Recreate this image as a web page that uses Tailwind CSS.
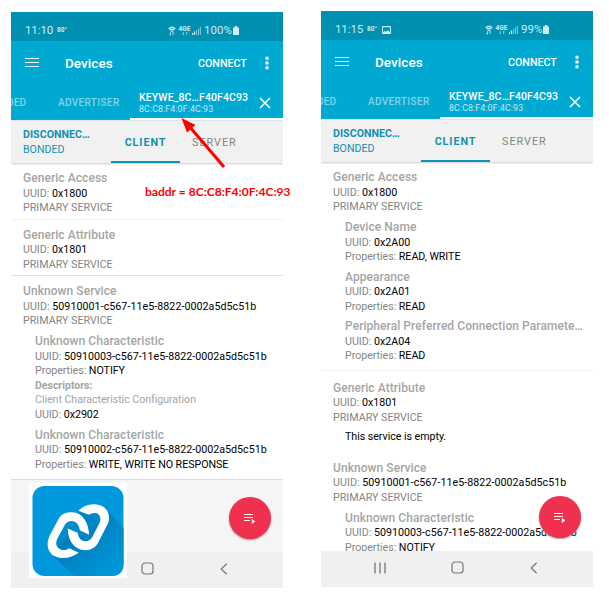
<!DOCTYPE html>
<html lang="en">
<head>
<meta charset="utf-8">
<title>Devices</title>
<script src="https://cdn.jsdelivr.net/npm/@tailwindcss/browser@4"></script>
</head>
<body class="relative flex h-[600px] w-[609px] items-start gap-[38px] overflow-hidden bg-white pl-[11px] font-['Roboto','Liberation_Sans',sans-serif] text-[10.7px] leading-[14.5px] whitespace-nowrap text-[#858585]">

<svg class="hidden">
  <symbol id="wifi" viewBox="0 0 8 10"><path d="M.6 3Q4-.6 7.4 3M1.8 4.3Q4 2.200 6.200 4.300M3 5.600Q4 4.700 5 5.600" fill="none" stroke="#c5e9f2" stroke-width="1.200"/><path d="M2.500 6v3.200M1.200 8l1.300 1.300M5 9.200V6.200M5 6.200l1.200 1.200" fill="none" stroke="#a8dcea" stroke-width=".9"/></symbol>
  <symbol id="arrows" viewBox="0 0 8 3"><path d="M2.500 0v3M1 1.500L2.500 3M5.500 3V0M5.500 0L7 1.500" fill="none" stroke="#7cc6da" stroke-width=".9"/></symbol>
  <symbol id="signal" viewBox="0 0 9 8"><path d="M.5 8V6M2.500 8V4.500" stroke="#cdebf3" stroke-width="1.200"/><path d="M4.500 8V3M6.500 8V1.500M8.400 8V0" stroke="#7cc6da" stroke-width="1.100"/></symbol>
  <symbol id="battery" viewBox="0 0 6 9"><path d="M0 1.500h1.700V0h2.600v1.500H6V9H0z" fill="#d0edf4"/></symbol>
  <symbol id="menu" viewBox="0 0 14 11"><path d="M0 1.500h14M0 5.500h14M0 9.500h14" stroke="#e6f6fa" stroke-width="1"/></symbol>
  <symbol id="dots" viewBox="0 0 4 14"><path d="M.5 .7h3v3h-3zM.5 5.500h3v3h-3zM.5 10.300h3v3h-3z" fill="#fff"/></symbol>
  <symbol id="close" viewBox="0 0 12 12"><path d="M1 1l10 10M11 1L1 11" stroke="#fff" stroke-width="1.500"/></symbol>
  <symbol id="queue" viewBox="0 0 12 11"><path d="M0 1.500h9M0 4.500h9M0 7.500h6" stroke="#fff" stroke-width="1"/><path d="M7.800 6v5l3.600-2.500z" fill="#fff"/></symbol>
  <symbol id="recents" viewBox="0 0 12 12"><path d="M1 .5v11M6 .5v11M11 .5v11" stroke="#777" stroke-width="1.300"/></symbol>
  <symbol id="home" viewBox="0 0 13 13"><rect x="1" y="1" width="11" height="11" rx="3" fill="none" stroke="#777" stroke-width="1.200"/></symbol>
  <symbol id="back" viewBox="0 0 8 12"><path d="M6.700 .8L1.200 6l5.500 5.200" fill="none" stroke="#777" stroke-width="1.200"/></symbol>
</svg>

<!-- First phone -->
<main class="relative mt-3 flex h-[576px] w-[272px] shrink-0 flex-col overflow-hidden">
  <header class="shrink-0 bg-[#00a9d1] text-white">
    <div class="flex h-[29px] items-center bg-[#0090b2] pt-2 pl-[14px] text-[11.500px] text-[#cdebf3]">
      <span class="w-[32px] tracking-[-0.100px]">11:10</span>
      <span class="w-[111px] text-[6.500px] font-bold">80°</span>
      <svg class="h-[10px] w-2"><use href="#wifi"/></svg>
      <span class="ml-[3px] flex w-[11px] flex-col items-center text-[6.500px] leading-[6px] font-bold"><span>4GE</span><svg class="h-[3px] w-2"><use href="#arrows"/></svg></span>
      <svg class="ml-[2px] h-2 w-[9px]"><use href="#signal"/></svg>
      <span class="ml-[3px] w-[28.500px] text-[11.500px]">100%</span>
      <svg class="h-[9px] w-[6px]"><use href="#battery"/></svg>
    </div>
    <div class="flex h-[44px] items-center pl-[14px]">
      <svg class="-mt-[1px] h-[11px] w-[14px]"><use href="#menu"/></svg>
      <h1 class="ml-[26px] w-[133px] text-[13.500px] font-medium tracking-[0.050px]">Devices</h1>
      <span class="w-[67px] pt-[2px] text-[10.700px] font-medium">CONNECT</span>
      <svg class="h-[14px] w-1"><use href="#dots"/></svg>
    </div>
    <div class="flex h-[35px] font-medium">
      <span class="w-[47px] pt-[11px] text-[10px] tracking-[0.200px] text-[#80d4e8]"><span class="-ml-[4px]">DED</span></span>
      <span class="w-[72px] pt-[11px] text-[10px] tracking-[0.350px] text-[#80d4e8]">ADVERTISER</span>
      <div class="flex w-[153px] border-b-2 border-white pl-[9px]">
        <div class="w-[120px] pt-[7px]"><div class="h-[11px] text-[10.500px] leading-[12px] tracking-[0.100px]">KEYWE_8C…F40F4C93</div><div class="text-[8.800px] leading-[12px] font-normal tracking-[0.120px] text-[#c3eaf4]">8C:C8:F4:0F:4C:93</div></div>
        <svg class="mt-3 h-3 w-3"><use href="#close"/></svg>
      </div>
    </div>
  </header>
  <nav class="flex h-[43px] shrink-0 border-t border-[#d8e6ea] bg-[#f1f1f1] shadow-[0_1px_2px_#ccc]">
    <div class="w-[100px] pt-[7px] pl-3 text-[10.600px] leading-[14.500px] text-[#1290ae]"><div class="font-bold tracking-[0.050px]">DISCONNEC…</div><div>BONDED</div></div>
    <div class="w-[69px] border-b-2 border-[#0f93b3] pt-[15px] text-center text-[10.800px] font-bold tracking-[0.900px] text-[#1290ae]">CLIENT</div>
    <div class="pt-[15px] pl-[12px] text-[10.800px] tracking-[1px]">SERVER</div>
  </nav>
  <div class="h-[316.500px] shrink-0 border-b border-[#dcdcdc]">
    <section class="h-[56.500px] border-b border-[#f1f1f1] pt-[7px] pl-3">
      <h2 class="text-[12px] leading-[16.500px] font-medium tracking-[0.060px] text-[#a5a5a5]">Generic Access</h2>
      <p>UUID: <span class="text-black">0x1800</span></p>
      <p>PRIMARY SERVICE</p>
    </section>
    <section class="h-[56.500px] border-b border-[#e2e2e2] pt-[7px] pl-3">
      <h2 class="text-[12px] leading-[16.500px] font-medium tracking-[0.060px] text-[#a5a5a5]">Generic Attribute</h2>
      <p>UUID: <span class="text-black">0x1801</span></p>
      <p>PRIMARY SERVICE</p>
    </section>
    <section class="pt-[7px] pl-3">
      <h2 class="text-[12px] leading-[16.500px] font-medium tracking-[0.060px] text-[#a5a5a5]">Unknown Service</h2>
      <p class="tracking-[0.040px]">UUID: <span class="text-black">50910001-c567-11e5-8822-0002a5d5c51b</span></p>
      <p>PRIMARY SERVICE</p>
      <div class="mt-[4.500px] pl-3">
        <h3 class="text-[12px] leading-[16.500px] font-medium tracking-[0.060px] text-[#a5a5a5]">Unknown Characteristic</h3>
        <p>UUID: <span class="text-black">50910003-c567-11e5-8822-0002a5d5c51b</span></p>
        <p class="tracking-[-0.050px]">Properties: <span class="text-black">NOTIFY</span></p>
        <p class="text-[10.500px] font-bold text-[#a5a5a5]">Descriptors:</p>
        <p class="tracking-[-0.060px] text-[#a5a5a5]">Client Characteristic Configuration</p>
        <p class="tracking-[-0.050px]">UUID: <span class="text-black">0x2902</span></p>
      </div>
      <div class="mt-[4.500px] pl-3">
        <h3 class="text-[12px] leading-[16.500px] font-medium tracking-[0.060px] text-[#a5a5a5]">Unknown Characteristic</h3>
        <p>UUID: <span class="text-black">50910002-c567-11e5-8822-0002a5d5c51b</span></p>
        <p class="tracking-[-0.050px]">Properties: <span class="text-black">WRITE, WRITE NO RESPONSE</span></p>
      </div>
    </section>
  </div>
  <div class="flex-1 bg-[#f5f5f5]"></div>
  <footer class="flex h-9 shrink-0 items-center bg-[#f0f0f0] pb-[3px] pl-[129.500px]">
    <svg class="h-[13px] w-[13px]"><use href="#home"/></svg>
    <svg class="ml-[66px] h-3 w-2"><use href="#back"/></svg>
  </footer>
  <button class="absolute top-[485px] left-[218px] flex size-[42px] items-center justify-center rounded-full bg-[#f0304f] shadow-[0_1px_2px_#999]"><svg class="h-[11px] w-3"><use href="#queue"/></svg></button>
  <!-- App logo over the footer -->
  <svg class="absolute top-[471px] left-[18px] h-[95px] w-[98px]" viewBox="0 0 98 95">
    <defs>
      <linearGradient id="shade" gradientUnits="userSpaceOnUse" x1="130" y1="140" x2="240" y2="260"><stop offset="0" stop-color="#007ab5"/><stop offset="1" stop-color="#0095d9"/></linearGradient>
    </defs>
    <path d="M0 0h98v95H0z" fill="#fff"/>
    <g transform="translate(-.5 -1) scale(.33333)">
      <rect x="12" y="12" width="273" height="270" rx="36" fill="#0098dc"/>
      <path d="M234 84L285 137V246Q285 282 249 282H139L74 222L130 150L180 96z" fill="url(#shade)"/>
      <path d="M108 125L160 80L200 92L215 105L190 165L150 160L120 200L90 200L82 185z" fill="#008ccb"/>
      <path d="M90 198L128 140L148 190L120 202z" fill="#0080bd"/>
      <path d="M155 92L182 97L215 135L188 168z" fill="#0083c1"/>
      <path d="M182 158C180 125 165 92 130 91C108 91 97 98 89 113L64 160C49 192 61 222 92 227C116 231 134 223 151 212L122 199C113 206 99 206 90 199C81 191 82 180 87 169L110 127C120 113 138 114 147 126Q152 133 154 145z" fill="#fff"/>
      <path d="M150 86C164 72 181 65 201 67C232 70 247 93 240 120Q238 127 234 133L210 180C200 200 181 208 158 203C132 196 117 168 118 138L147 151C149 166 157 178 171 178C181 178 187 173 191 166L213 123C220 108 213 94 200 93Q189 92 181 98z" fill="#fff"/>
      <path d="M154 145L147 151L118 138" fill="none" stroke="#0086c4" stroke-width="3"/>
    </g>
  </svg>
</main>

<!-- Second phone -->
<main class="relative mt-[11px] flex h-[576px] w-[272px] shrink-0 flex-col overflow-hidden">
  <header class="shrink-0 bg-[#00a9d1] text-white">
    <div class="flex h-[29px] items-center bg-[#0090b2] pt-2 pl-[14px] text-[11.500px] text-[#cdebf3]">
      <span class="w-[32px] tracking-[-0.100px]">11:15</span>
      <span class="w-[15px] text-[6.500px] font-bold">80°</span>
      <svg class="mr-[94px] h-2 w-[9px]" viewBox="0 0 9 8"><rect width="9" height="8" rx="1" fill="#d0edf4"/><path d="M1 6.500V1.200h7v5.300L5.800 4 4 6 2.800 4.800z" fill="#0090b2"/></svg>
      <svg class="h-[10px] w-2"><use href="#wifi"/></svg>
      <span class="ml-[3px] flex w-[11px] flex-col items-center text-[6.500px] leading-[6px] font-bold"><span>4GE</span><svg class="h-[3px] w-2"><use href="#arrows"/></svg></span>
      <svg class="ml-[2px] h-2 w-[9px]"><use href="#signal"/></svg>
      <span class="ml-[3px] w-[22px] text-[11.500px]">99%</span>
      <svg class="h-[9px] w-[6px]"><use href="#battery"/></svg>
    </div>
    <div class="flex h-[44px] items-center pl-[14px]">
      <svg class="-mt-[1px] h-[11px] w-[14px]"><use href="#menu"/></svg>
      <h1 class="ml-[26px] w-[133px] text-[13.500px] font-medium tracking-[0.050px]">Devices</h1>
      <span class="w-[67px] pt-[2px] text-[10.700px] font-medium">CONNECT</span>
      <svg class="h-[14px] w-1"><use href="#dots"/></svg>
    </div>
    <div class="flex h-[35px] font-medium">
      <span class="w-[47px] pt-[11px] text-[10px] tracking-[0.200px] text-[#80d4e8]"><span class="-ml-[4px]">DED</span></span>
      <span class="w-[72px] pt-[11px] text-[10px] tracking-[0.350px] text-[#80d4e8]">ADVERTISER</span>
      <div class="flex w-[153px] border-b-2 border-white pl-[9px]">
        <div class="w-[120px] pt-[7px]"><div class="h-[11px] text-[10.500px] leading-[12px] tracking-[0.100px]">KEYWE_8C…F40F4C93</div><div class="text-[8.800px] leading-[12px] font-normal tracking-[0.120px] text-[#c3eaf4]">8C:C8:F4:0F:4C:93</div></div>
        <svg class="mt-3 h-3 w-3"><use href="#close"/></svg>
      </div>
    </div>
  </header>
  <nav class="flex h-[43px] shrink-0 border-t border-[#d8e6ea] bg-[#f1f1f1] shadow-[0_1px_2px_#ccc]">
    <div class="w-[100px] pt-[7px] pl-3 text-[10.600px] leading-[14.500px] text-[#1290ae]"><div class="font-bold tracking-[0.050px]">DISCONNEC…</div><div>BONDED</div></div>
    <div class="w-[69px] border-b-2 border-[#0f93b3] pt-[15px] text-center text-[10.800px] font-bold tracking-[0.900px] text-[#1290ae]">CLIENT</div>
    <div class="pt-[15px] pl-[12px] text-[10.800px] tracking-[1px]">SERVER</div>
  </nav>
  <div class="h-[389px] shrink-0 overflow-hidden">
    <section class="h-[209px] border-b border-[#f1f1f1] pt-[7px] pl-3">
      <h2 class="text-[12px] leading-[16.500px] font-medium tracking-[0.060px] text-[#a5a5a5]">Generic Access</h2>
      <p>UUID: <span class="text-black">0x1800</span></p>
      <p>PRIMARY SERVICE</p>
      <div class="mt-[4.500px] pl-3">
        <h3 class="text-[12px] leading-[16.500px] font-medium tracking-[0.060px] text-[#a5a5a5]">Device Name</h3>
        <p>UUID: <span class="text-black">0x2A00</span></p>
        <p class="tracking-[-0.050px]">Properties: <span class="text-black">READ, WRITE</span></p>
      </div>
      <div class="mt-[4px] pl-3">
        <h3 class="text-[12px] leading-[16.500px] font-medium tracking-[0.060px] text-[#a5a5a5]">Appearance</h3>
        <p>UUID: <span class="text-black">0x2A01</span></p>
        <p class="tracking-[-0.050px]">Properties: <span class="text-black">READ</span></p>
      </div>
      <div class="mt-[4px] pl-3">
        <h3 class="text-[12px] leading-[16.500px] font-medium tracking-[0.060px] text-[#a5a5a5]">Peripheral Preferred Connection Paramete…</h3>
        <p>UUID: <span class="text-black">0x2A04</span></p>
        <p class="tracking-[-0.050px]">Properties: <span class="text-black">READ</span></p>
      </div>
    </section>
    <section class="h-[80.500px] pt-[8.500px] pl-3">
      <h2 class="text-[12px] leading-[16.500px] font-medium tracking-[0.060px] text-[#a5a5a5]">Generic Attribute</h2>
      <p>UUID: <span class="text-black">0x1801</span></p>
      <p>PRIMARY SERVICE</p>
      <p class="mt-[4.500px] pl-3 tracking-[-0.050px] text-black">This service is empty.</p>
    </section>
    <section class="pt-[8px] pl-3">
      <h2 class="text-[12px] leading-[16.500px] font-medium tracking-[0.060px] text-[#a5a5a5]">Unknown Service</h2>
      <p class="tracking-[0.040px]">UUID: <span class="text-black">50910001-c567-11e5-8822-0002a5d5c51b</span></p>
      <p>PRIMARY SERVICE</p>
      <div class="mt-[4.500px] pl-3">
        <h3 class="text-[12px] leading-[16.500px] font-medium tracking-[0.060px] text-[#a5a5a5]">Unknown Characteristic</h3>
        <p>UUID: <span class="text-black">50910003-c567-11e5-8822-0002a5d5c51b</span></p>
        <p class="tracking-[-0.050px]">Properties: <span class="text-black">NOTIFY</span></p>
      </div>
    </section>
  </div>
  <footer class="flex h-9 shrink-0 items-center bg-[#f0f0f0] pb-[3px] pl-[53px]">
    <svg class="h-3 w-3"><use href="#recents"/></svg>
    <svg class="ml-[64.500px] h-[13px] w-[13px]"><use href="#home"/></svg>
    <svg class="ml-[66px] h-3 w-2"><use href="#back"/></svg>
  </footer>
  <button class="absolute top-[485px] left-[218px] flex size-[42px] items-center justify-center rounded-full bg-[#f0304f] shadow-[0_1px_2px_#999]"><svg class="h-[11px] w-3"><use href="#queue"/></svg></button>
</main>

<!-- Address annotation -->
<svg class="absolute top-[115px] left-[178px] h-[56px] w-[52px]" viewBox="0 0 52 56"><path d="M46 52L11 11" stroke="#f00" stroke-width="3"/><path d="M3.500 3l14 7-8.500 7.500z" fill="#f00"/></svg>
<p class="absolute top-[184px] left-[145px] font-['Lato',sans-serif] text-[12px] leading-[16px] font-bold tracking-[0.020px] text-[#f00]">baddr = 8C:C8:F4:0F:4C:93</p>
</body>
</html>
